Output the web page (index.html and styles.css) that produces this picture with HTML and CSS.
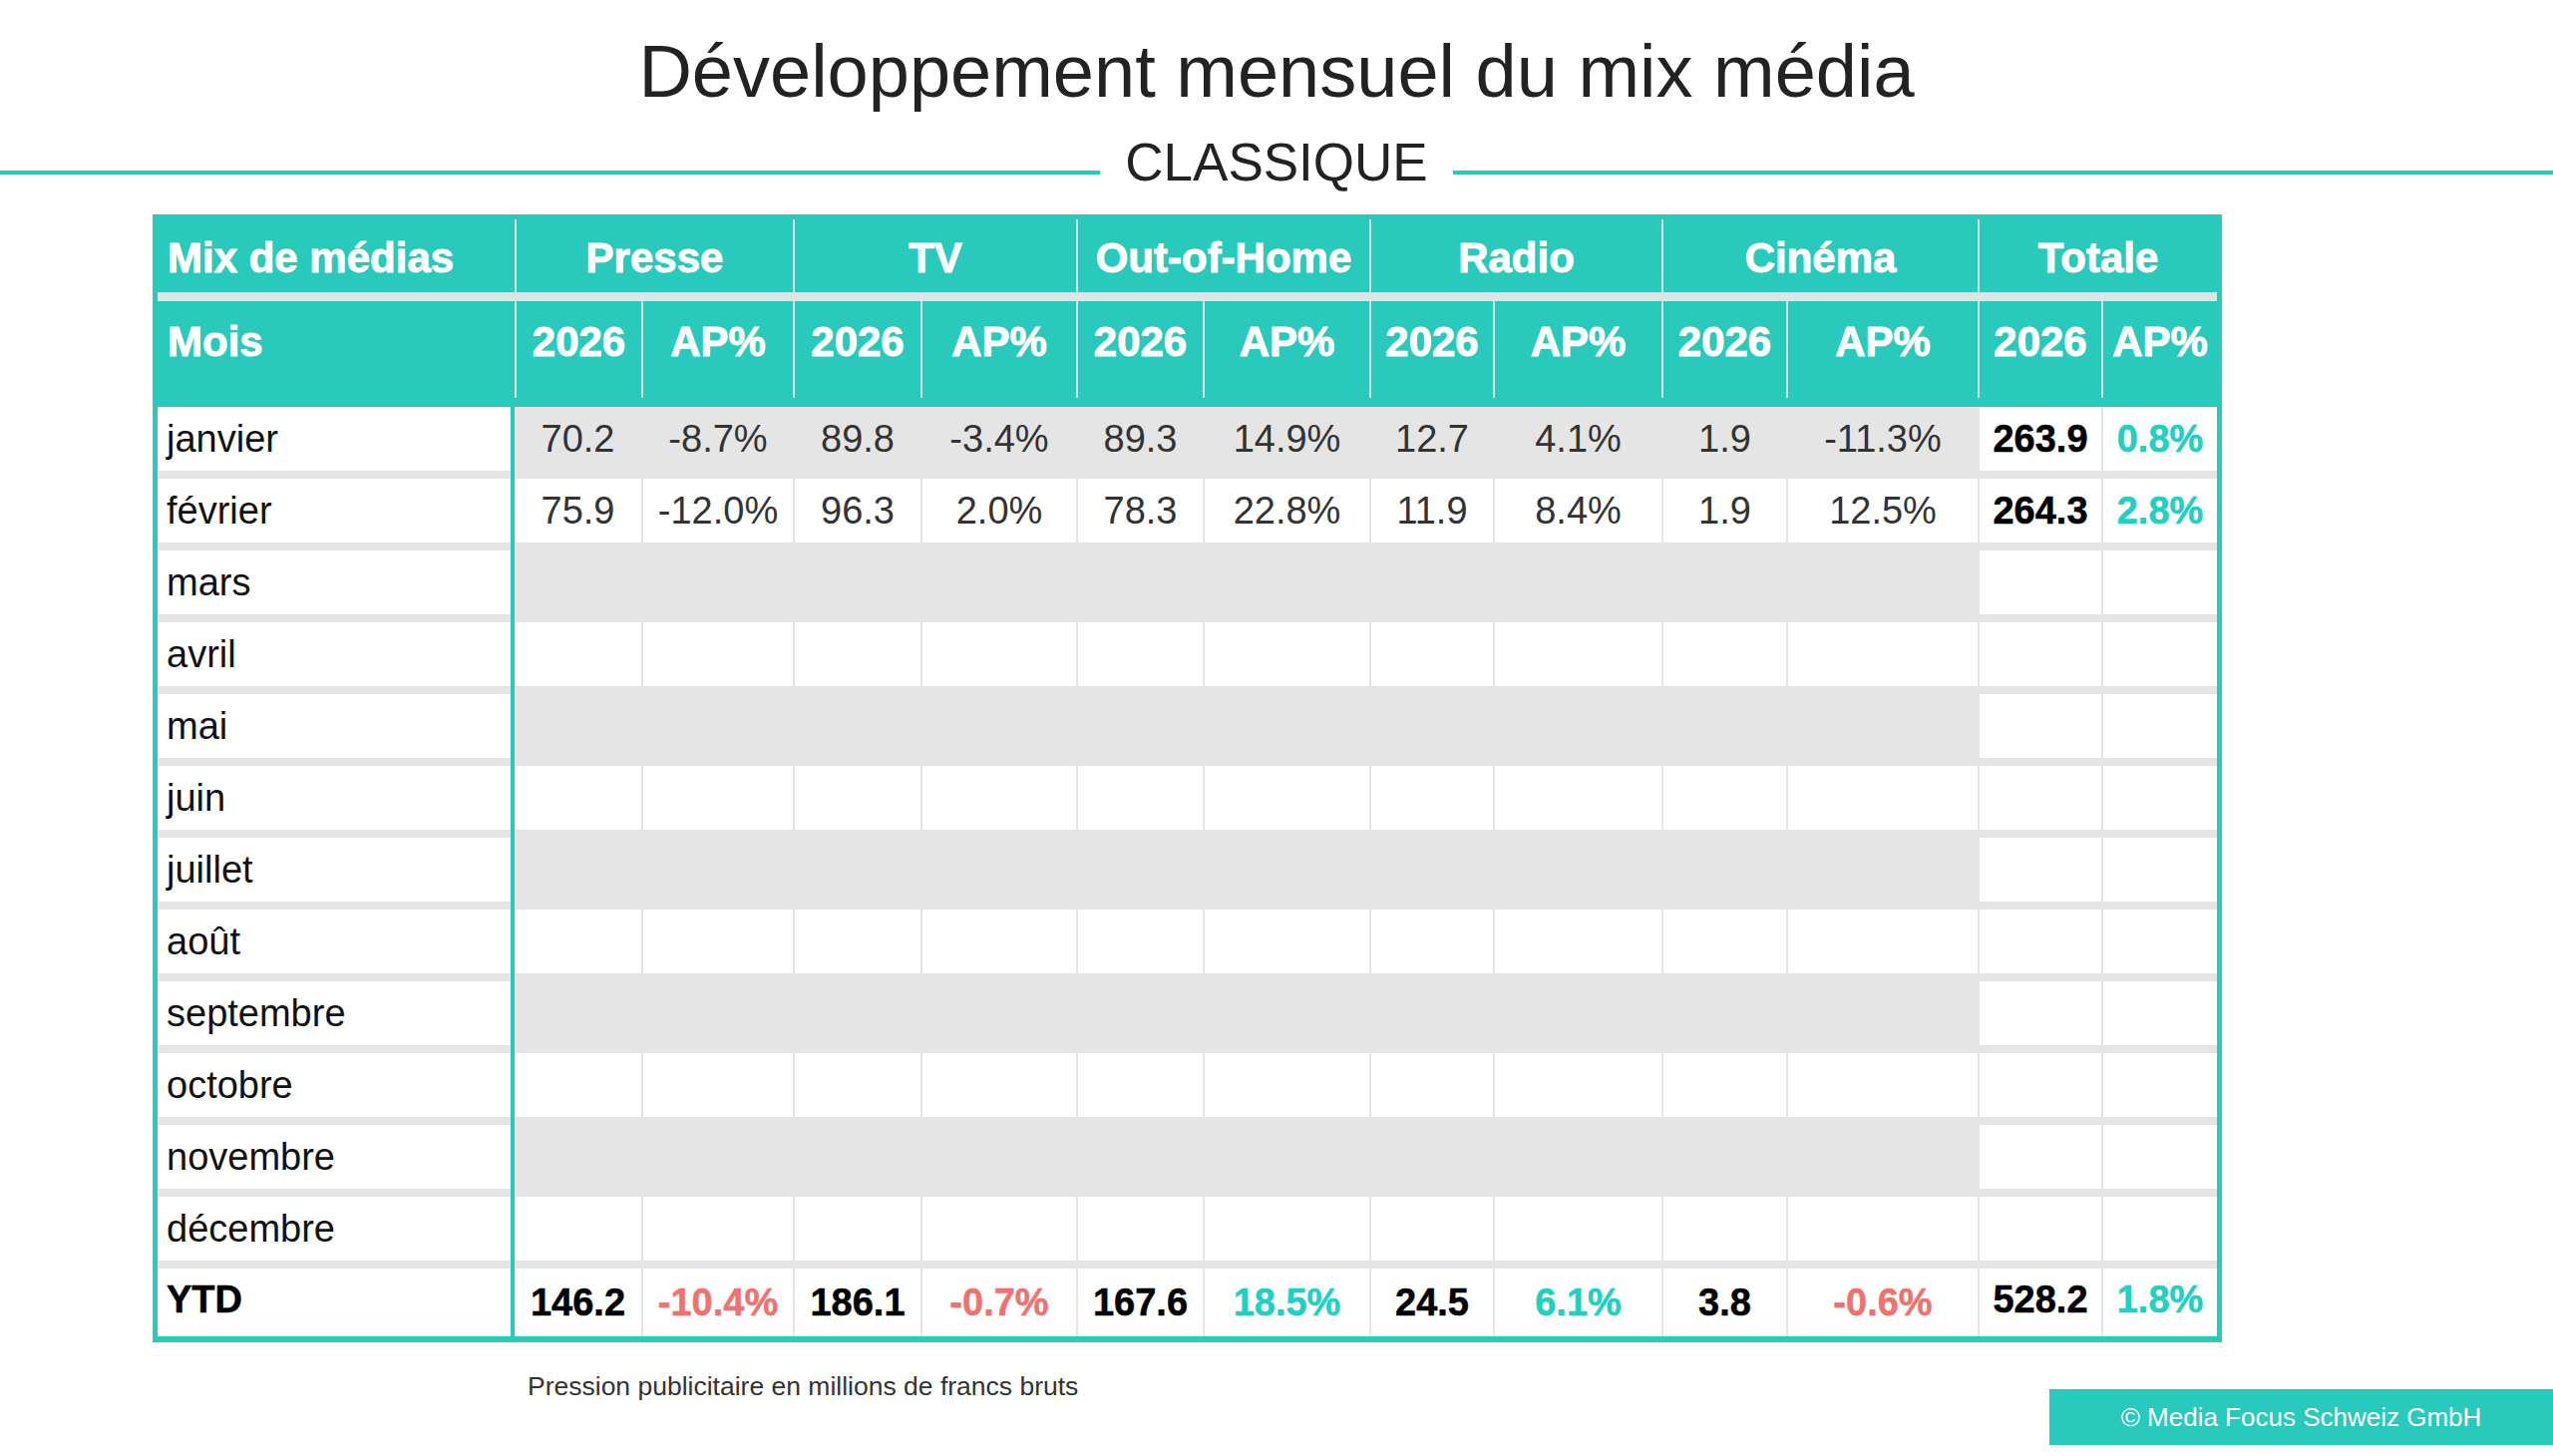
FILE: index.html
```html
<!DOCTYPE html>
<html lang="fr">
<head>
<meta charset="utf-8">
<title>Développement mensuel du mix média</title>
<link rel="stylesheet" href="styles.css">
</head>
<body>
<div class="page">
  <h1 class="title">Développement mensuel du mix média</h1>
  <div class="subtitle"><span class="rule"></span><span class="subtitle-text">CLASSIQUE</span><span class="rule"></span></div>

  <div class="table">
    <div class="thead">
      <div class="hrow hrow-groups">
        <div class="hcell hcell-first">Mix de médias</div>
        <div class="hcell span2">Presse</div>
        <div class="hcell span2">TV</div>
        <div class="hcell span2">Out-of-Home</div>
        <div class="hcell span2">Radio</div>
        <div class="hcell span2">Cinéma</div>
        <div class="hcell span2">Totale</div>
      </div>
      <div class="hrow hrow-sub">
        <div class="hcell hcell-first">Mois</div>
        <div class="hcell">2026</div><div class="hcell">AP%</div>
        <div class="hcell">2026</div><div class="hcell">AP%</div>
        <div class="hcell">2026</div><div class="hcell">AP%</div>
        <div class="hcell">2026</div><div class="hcell">AP%</div>
        <div class="hcell">2026</div><div class="hcell">AP%</div>
        <div class="hcell">2026</div><div class="hcell">AP%</div>
      </div>
    </div>

    <div class="tbody">
      <div class="row row-shaded">
        <div class="cell cell-month">janvier</div>
        <div class="cell">70.2</div><div class="cell">-8.7%</div>
        <div class="cell">89.8</div><div class="cell">-3.4%</div>
        <div class="cell">89.3</div><div class="cell">14.9%</div>
        <div class="cell">12.7</div><div class="cell">4.1%</div>
        <div class="cell">1.9</div><div class="cell">-11.3%</div>
        <div class="cell cell-total">263.9</div><div class="cell cell-total pos">0.8%</div>
      </div>
      <div class="row">
        <div class="cell cell-month">février</div>
        <div class="cell">75.9</div><div class="cell">-12.0%</div>
        <div class="cell">96.3</div><div class="cell">2.0%</div>
        <div class="cell">78.3</div><div class="cell">22.8%</div>
        <div class="cell">11.9</div><div class="cell">8.4%</div>
        <div class="cell">1.9</div><div class="cell">12.5%</div>
        <div class="cell cell-total">264.3</div><div class="cell cell-total pos">2.8%</div>
      </div>
      <div class="row row-shaded">
        <div class="cell cell-month">mars</div>
        <div class="cell"></div><div class="cell"></div><div class="cell"></div><div class="cell"></div><div class="cell"></div><div class="cell"></div><div class="cell"></div><div class="cell"></div><div class="cell"></div><div class="cell"></div>
        <div class="cell cell-total"></div><div class="cell cell-total"></div>
      </div>
      <div class="row">
        <div class="cell cell-month">avril</div>
        <div class="cell"></div><div class="cell"></div><div class="cell"></div><div class="cell"></div><div class="cell"></div><div class="cell"></div><div class="cell"></div><div class="cell"></div><div class="cell"></div><div class="cell"></div>
        <div class="cell cell-total"></div><div class="cell cell-total"></div>
      </div>
      <div class="row row-shaded">
        <div class="cell cell-month">mai</div>
        <div class="cell"></div><div class="cell"></div><div class="cell"></div><div class="cell"></div><div class="cell"></div><div class="cell"></div><div class="cell"></div><div class="cell"></div><div class="cell"></div><div class="cell"></div>
        <div class="cell cell-total"></div><div class="cell cell-total"></div>
      </div>
      <div class="row">
        <div class="cell cell-month">juin</div>
        <div class="cell"></div><div class="cell"></div><div class="cell"></div><div class="cell"></div><div class="cell"></div><div class="cell"></div><div class="cell"></div><div class="cell"></div><div class="cell"></div><div class="cell"></div>
        <div class="cell cell-total"></div><div class="cell cell-total"></div>
      </div>
      <div class="row row-shaded">
        <div class="cell cell-month">juillet</div>
        <div class="cell"></div><div class="cell"></div><div class="cell"></div><div class="cell"></div><div class="cell"></div><div class="cell"></div><div class="cell"></div><div class="cell"></div><div class="cell"></div><div class="cell"></div>
        <div class="cell cell-total"></div><div class="cell cell-total"></div>
      </div>
      <div class="row">
        <div class="cell cell-month">août</div>
        <div class="cell"></div><div class="cell"></div><div class="cell"></div><div class="cell"></div><div class="cell"></div><div class="cell"></div><div class="cell"></div><div class="cell"></div><div class="cell"></div><div class="cell"></div>
        <div class="cell cell-total"></div><div class="cell cell-total"></div>
      </div>
      <div class="row row-shaded">
        <div class="cell cell-month">septembre</div>
        <div class="cell"></div><div class="cell"></div><div class="cell"></div><div class="cell"></div><div class="cell"></div><div class="cell"></div><div class="cell"></div><div class="cell"></div><div class="cell"></div><div class="cell"></div>
        <div class="cell cell-total"></div><div class="cell cell-total"></div>
      </div>
      <div class="row">
        <div class="cell cell-month">octobre</div>
        <div class="cell"></div><div class="cell"></div><div class="cell"></div><div class="cell"></div><div class="cell"></div><div class="cell"></div><div class="cell"></div><div class="cell"></div><div class="cell"></div><div class="cell"></div>
        <div class="cell cell-total"></div><div class="cell cell-total"></div>
      </div>
      <div class="row row-shaded">
        <div class="cell cell-month">novembre</div>
        <div class="cell"></div><div class="cell"></div><div class="cell"></div><div class="cell"></div><div class="cell"></div><div class="cell"></div><div class="cell"></div><div class="cell"></div><div class="cell"></div><div class="cell"></div>
        <div class="cell cell-total"></div><div class="cell cell-total"></div>
      </div>
      <div class="row">
        <div class="cell cell-month">décembre</div>
        <div class="cell"></div><div class="cell"></div><div class="cell"></div><div class="cell"></div><div class="cell"></div><div class="cell"></div><div class="cell"></div><div class="cell"></div><div class="cell"></div><div class="cell"></div>
        <div class="cell cell-total"></div><div class="cell cell-total"></div>
      </div>
      <div class="row row-ytd">
        <div class="cell cell-month">YTD</div>
        <div class="cell">146.2</div><div class="cell neg">-10.4%</div>
        <div class="cell">186.1</div><div class="cell neg">-0.7%</div>
        <div class="cell">167.6</div><div class="cell pos">18.5%</div>
        <div class="cell">24.5</div><div class="cell pos">6.1%</div>
        <div class="cell">3.8</div><div class="cell neg">-0.6%</div>
        <div class="cell cell-total">528.2</div><div class="cell cell-total pos">1.8%</div>
      </div>
    </div>
  </div>

  <div class="bottom">
    <p class="note">Pression publicitaire en millions de francs bruts</p>
    <div class="copyright">© Media Focus Schweiz GmbH</div>
  </div>
</div>
</body>
</html>
```

FILE: styles.css
```css
* { box-sizing: border-box; }

html, body {
  margin: 0;
  padding: 0;
  background: #ffffff;
}

body {
  font-family: "Liberation Sans", Arial, sans-serif;
  color: #222222;
}

.page {
  width: 2560px;
  height: 1460px;
  padding-top: 35px;
  overflow: hidden;
}

.title {
  margin: 0;
  font-size: 74px;
  line-height: 1;
  font-weight: 400;
  text-align: center;
  color: #222222;
}

.subtitle {
  display: flex;
  align-items: flex-start;
  margin-top: 27px;
}

.rule {
  flex: 1;
  height: 4px;
  margin-top: 35px;
  background: #29c9bc;
}

.subtitle-text {
  padding: 0 25px;
  font-size: 53px;
  line-height: 1;
  color: #222222;
}

/* ---------- table ---------- */

.table {
  --cols: 358px 127px 152px 128px 156px 127px 167px 124px 169px 125px 192px 124px 116px;
  width: 2075px;
  margin: 26px 0 0 153px;
  border: 5px solid #29c9bc;
  border-bottom-width: 6px;
  background: #ffffff;
}

.thead {
  background: #29c9bc;
  padding-bottom: 9px;
}

.hrow {
  display: grid;
  grid-template-columns: var(--cols);
}

.hrow-groups {
  height: 73px;
  border-bottom: 9px solid #e3e3e3;
  box-sizing: content-box;
}

.hrow-sub {
  height: 97px;
}

.hcell {
  color: #ffffff;
  font-weight: 700;
  font-size: 42px;
  line-height: 1;
  text-align: center;
  white-space: nowrap;
  -webkit-text-stroke: 0.9px #ffffff;
}

.hrow-groups .hcell { padding-top: 18px; }
.hrow-sub .hcell { padding-top: 20px; }

.hcell + .hcell {
  border-left: 2px solid #d8e4e2;
}

.hcell-first {
  text-align: left;
  padding-left: 10px;
}

.span2 { grid-column: span 2; }

.tbody {
  display: grid;
  row-gap: 8px;
  background: linear-gradient(to right, #e5e5e5 354px, #29c9bc 354px, #29c9bc 358px, #e5e5e5 358px);
}

.row {
  display: grid;
  grid-template-columns: var(--cols);
  height: 64px;
}

.row-ytd { height: 68px; }

.cell {
  display: flex;
  align-items: center;
  justify-content: center;
  background: #ffffff;
  border-left: 2px solid #e6e6e6;
  font-size: 38px;
  line-height: 1;
  color: #333333;
  white-space: nowrap;
}

.cell-month {
  justify-content: flex-start;
  padding-left: 9px;
  border-left: 0;
  border-right: 4px solid #29c9bc;
  color: #111111;
}

.cell-month + .cell { border-left: 0; }

.row-shaded .cell:not(.cell-month):not(.cell-total) {
  background: #e5e5e5;
  border-left-color: #e5e5e5;
}

.cell-total {
  font-weight: 700;
  color: #000000;
  -webkit-text-stroke: 0.5px currentColor;
}

.row-ytd .cell {
  font-weight: 700;
  color: #000000;
  -webkit-text-stroke: 0.5px currentColor;
}

.row-ytd .cell-month { padding-bottom: 6px; }

.row-ytd .cell-total { padding-bottom: 6px; }

.cell.pos { color: #22cfc0; }
.cell.neg { color: #ee7370; }

/* ---------- bottom ---------- */

.bottom {
  display: flex;
  justify-content: space-between;
  align-items: flex-start;
}

.note {
  margin: 31px 0 0 529px;
  font-size: 26.5px;
  line-height: 1;
  color: #333333;
}

.copyright {
  width: 505px;
  height: 56px;
  margin-top: 47px;
  background: #29c9bc;
  color: #ffffff;
  font-size: 26px;
  display: flex;
  align-items: center;
  justify-content: center;
}
```
